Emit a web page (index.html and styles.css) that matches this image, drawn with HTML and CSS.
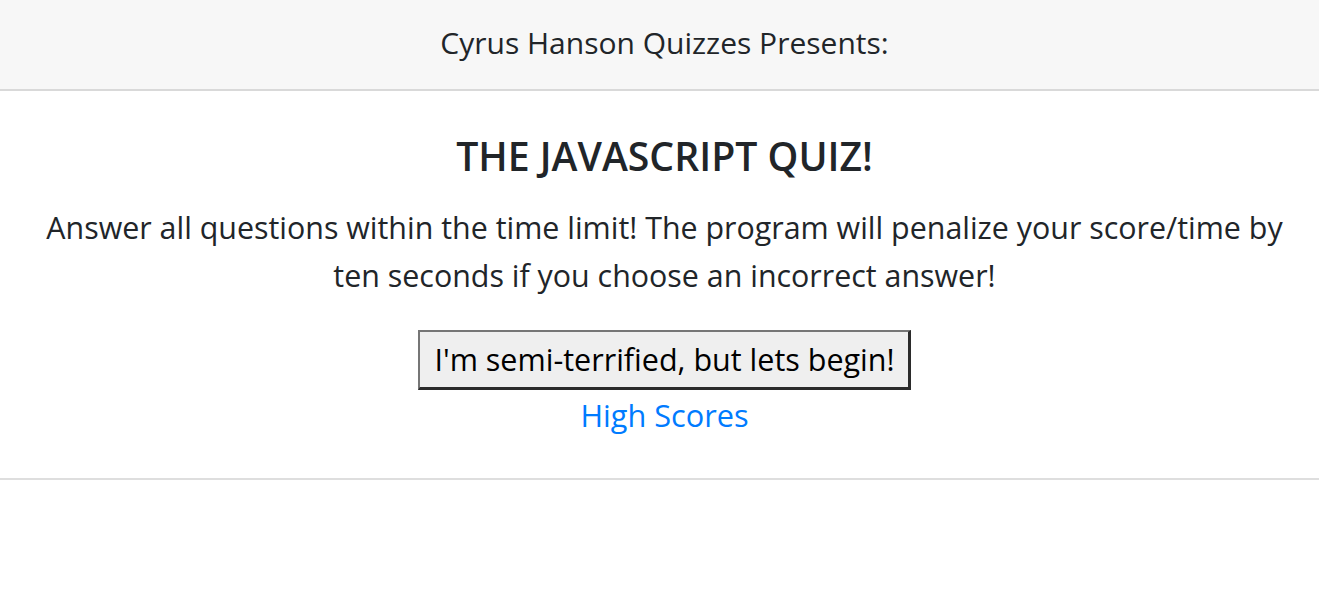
FILE: index.html
```html
<!DOCTYPE html>
<html lang="en">
<head>
<meta charset="utf-8">
<title>JavaScript Quiz</title>
<link rel="stylesheet" href="styles.css">
</head>
<body>
  <header class="top-bar">
    <span class="top-bar__text">Cyrus Hanson Quizzes Presents:</span>
  </header>
  <main class="intro">
    <h5 class="intro__title">THE JAVASCRIPT QUIZ!</h5>
    <p class="intro__text">Answer all questions within the time limit! The program will penalize your score/time by ten seconds if you choose an incorrect answer!</p>
    <button class="intro__start" type="button">I'm semi-terrified, but lets begin!</button>
    <a class="intro__link" href="#">High Scores</a>
  </main>
</body>
</html>
```

FILE: styles.css
```css
html, body {
  margin: 0;
  padding: 0;
  background: #ffffff;
}

body {
  font-family: "Open Sans", "Noto Sans", sans-serif;
  color: #212529;
}

.top-bar {
  height: 89px;
  padding-left: 10px;
  background: #f7f7f7;
  border-bottom: 2px solid #d9d9d9;
  display: flex;
  align-items: center;
  justify-content: center;
  box-sizing: content-box;
}

.top-bar__text {
  font-size: 30px;
  line-height: 40px;
  margin-top: -4px;
}

.intro {
  display: flex;
  flex-direction: column;
  align-items: center;
  text-align: center;
  padding: 41px 20px 39px 30px;
  border-bottom: 2px solid #dedede;
}

.intro__title {
  margin: 0;
  font-size: 39.2px;
  font-weight: 600;
  line-height: 48px;
}

.intro__text {
  margin: 24px 0 0;
  font-size: 30.4px;
  line-height: 48px;
}

.intro__start {
  margin-top: 30px;
  font-family: inherit;
  font-size: 30.5px;
  line-height: 41px;
  color: #000000;
  background: #efefef;
  padding: 7px 13px 7px 14px;
  border-style: solid;
  border-width: 2px 3px 3px 2px;
  border-color: #767676 #2b2b2b #2b2b2b #767676;
  border-radius: 0;
}

.intro__link {
  margin-top: 1px;
  font-size: 30.7px;
  line-height: 48px;
  color: #007bff;
  text-decoration: none;
}
```
